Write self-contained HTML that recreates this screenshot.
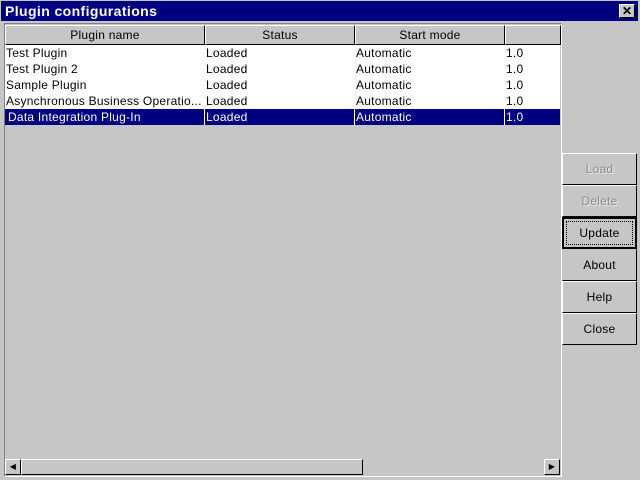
<!DOCTYPE html>
<html><head><style>
*{margin:0;padding:0;box-sizing:border-box}
body{width:640px;height:480px;background:#c6c6c6;font-family:"Liberation Sans",sans-serif;font-size:12px;letter-spacing:0.25px;position:relative;overflow:hidden}
.a{position:absolute}
.title{left:1px;top:1px;width:637px;height:20px;background:#000080;color:#fff;font-weight:bold;font-size:14px;line-height:21px;padding-left:4px;letter-spacing:0.4px}
.x{left:619px;top:4px;width:16px;height:14px;background:#c6c6c6;border:1px solid;border-color:#fff #000 #000 #fff;font-size:12px;line-height:12px;text-align:center;color:#000;font-weight:bold;letter-spacing:0}
.tbl{left:4px;top:23px;width:558px;height:454px;border:1px solid;border-color:#808080 #fff #fff #808080;background:#c6c6c6}
.hd{top:25px;height:20px;background:#c6c6c6;border:1px solid;border-color:#fff #000 #000 #fff;text-align:center;line-height:18px}
.white{left:5px;top:45px;width:555px;height:80px;background:#fff}
.c{height:16px;line-height:16px;white-space:nowrap;overflow:hidden}
.sel{left:5px;top:109px;width:555px;height:16px;background:#000080}
.btn{left:562px;width:75px;height:32px;border:1px solid;border-color:#fff #000 #000 #fff;text-align:center;line-height:30px}
.dis{color:#8a8a8a;text-shadow:1px 1px #eee}
.sb{height:16px;top:459px;border:1px solid;border-color:#fff #000 #000 #fff;background:#c6c6c6}
</style></head><body>
<div class="a title">Plugin configurations</div>
<div class="a x">✕</div>
<div class="a tbl"></div>
<div class="a hd" style="left:5px;width:200px">Plugin name</div>
<div class="a hd" style="left:205px;width:150px">Status</div>
<div class="a hd" style="left:355px;width:150px">Start mode</div>
<div class="a hd" style="left:505px;width:56px"></div>
<div class="a white"></div>
<div class="a sel"></div>
<div class="a" style="left:204px;top:109px;width:1px;height:16px;background:#fff"></div>
<div class="a" style="left:354px;top:109px;width:1px;height:16px;background:#fff"></div>
<div class="a" style="left:504px;top:109px;width:1px;height:16px;background:#fff"></div>
<div class="a" style="left:6px;top:45px">
<div class="c" style="width:198px">Test Plugin</div><div class="c">Test Plugin 2</div><div class="c">Sample Plugin</div><div class="c" style="width:198px">Asynchronous Business Operatio...</div><div class="c" style="color:#fff;padding-left:2px">Data Integration Plug-In</div></div>
<div class="a" style="left:206px;top:45px"><div class="c">Loaded</div><div class="c">Loaded</div><div class="c">Loaded</div><div class="c">Loaded</div><div class="c" style="color:#fff">Loaded</div></div>
<div class="a" style="left:356px;top:45px"><div class="c">Automatic</div><div class="c">Automatic</div><div class="c">Automatic</div><div class="c">Automatic</div><div class="c" style="color:#fff">Automatic</div></div>
<div class="a" style="left:506px;top:45px"><div class="c">1.0</div><div class="c">1.0</div><div class="c">1.0</div><div class="c">1.0</div><div class="c" style="color:#fff">1.0</div></div>
<div class="a btn dis" style="top:153px">Load</div>
<div class="a btn dis" style="top:185px">Delete</div>
<div class="a btn" style="top:217px;border:2px solid #000"><div style="margin:2px;border:1px dotted #000;line-height:22px">Update</div></div>
<div class="a btn" style="top:249px;border-color:#c6c6c6 #000 #000 #c6c6c6">About</div>
<div class="a btn" style="top:281px">Help</div>
<div class="a btn" style="top:313px">Close</div>
<div class="a" style="left:5px;top:459px;width:555px;height:16px;background:#c6c6c6"></div>
<div class="a sb" style="left:5px;width:16px;font-size:8px;text-align:center;line-height:14px">◀</div>
<div class="a sb" style="left:21px;width:342px"></div>
<div class="a sb" style="left:544px;width:16px;font-size:8px;text-align:center;line-height:14px">▶</div>
</body></html>
